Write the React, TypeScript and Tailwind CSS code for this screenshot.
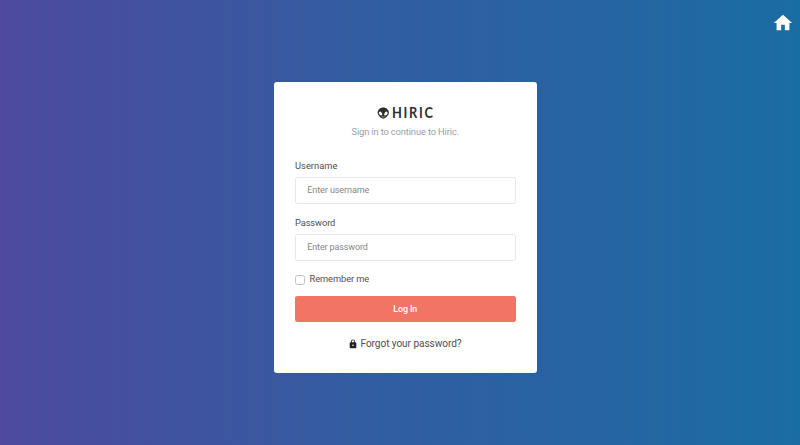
import React from "react";

type IconProps = { d: string; className: string };

function Icon({ d, className }: IconProps) {
  return (
    <svg viewBox="0 0 24 24" fill="currentColor" className={className} aria-hidden="true">
      <path d={d} />
    </svg>
  );
}

function AlienIcon({ className }: { className: string }) {
  return (
    <svg viewBox="0 0 24 24" className={className} aria-hidden="true">
      <path fill="currentColor" d="M12 2.5C17 2.5 21.3 6 21.3 10.8C21.3 15.4 15.5 21 12 21C8.5 21 2.7 15.4 2.7 10.8C2.7 6 7 2.5 12 2.5Z" />
      <ellipse cx="7.6" cy="12.6" rx="2.3" ry="3.6" transform="rotate(-38 7.6 12.6)" fill="#fff" />
      <ellipse cx="16.4" cy="12.6" rx="2.3" ry="3.6" transform="rotate(38 16.4 12.6)" fill="#fff" />
      <path d="M9.5 17.6Q12 19.2 14.5 17.6" fill="none" stroke="#fff" strokeWidth="0.9" />
    </svg>
  );
}

const HOME = "M10,20V14H14V20H19V12H22L12,3L2,12H5V20H10Z";
const LOCK =
  "M12,17A2,2 0 0,0 14,15C14,13.89 13.1,13 12,13A2,2 0 0,0 10,15A2,2 0 0,0 12,17M18,8A2,2 0 0,1 20,10V20A2,2 0 0,1 18,22H6A2,2 0 0,1 4,20V10C4,8.89 4.9,8 6,8H7V6A5,5 0 0,1 12,1A5,5 0 0,1 17,6V8H18M12,3A3,3 0 0,0 9,6V8H15V6A3,3 0 0,0 12,3Z";

export default function App() {
  return (
    <div className="relative flex h-[445px] w-[800px] items-start overflow-hidden bg-[linear-gradient(90deg,#4e4a9f_0%,#3b57a0_31%,#2f5ea1_50%,#2664a2_75%,#1a6da3_100%)] pt-[82px] pl-[273.5px] font-['Roboto',sans-serif] text-[#505050]">
      <a href="#" aria-label="Home" className="absolute top-[12px] right-[6px] text-white">
        <Icon d={HOME} className="size-[22px]" />
      </a>
      <main className="flex h-[290.5px] w-[263.5px] flex-col rounded-[3px] bg-white px-[21.5px] pt-[22px]">
        <div className="flex h-[18px] items-center justify-center text-[#2f2f2f]">
          <AlienIcon className="mr-[1px] ml-[1px] size-[14.5px]" />
          <span className="-mr-[10px] mb-[3.5px] origin-left scale-x-[0.8] font-['Lato',sans-serif] text-[16px] leading-[17px] font-bold tracking-[2.1px]">HIRIC</span>
        </div>
        <p className="mt-[2px] text-center text-[9.3px] leading-[16px] tracking-[-0.12px] text-[#98a0a8]">Sign in to continue to Hiric.</p>
        <form className="mt-[18px] flex flex-col" onSubmit={(e) => e.preventDefault()}>
          <label htmlFor="username" className="h-[19px] text-[9.3px] leading-[16px] tracking-[0.03px]">Username</label>
          <input id="username" placeholder="Enter username" className="h-[27px] w-full rounded-[2.5px] border border-[#e5e7ea] bg-white px-[11.3px] pb-[2px] text-[9px] tracking-[-0.08px] outline-none placeholder:text-[#7f878f]" />
          <label htmlFor="password" className="mt-[11px] h-[19px] text-[9.3px] leading-[16px] tracking-[-0.1px]">Password</label>
          <input id="password" type="password" placeholder="Enter password" className="h-[27px] w-full rounded-[2.5px] border border-[#e5e7ea] bg-white px-[11.3px] pb-[2px] text-[9px] tracking-[-0.13px] outline-none placeholder:text-[#7f878f]" />
          <label className="mt-[10px] flex h-[16px] items-center text-[9.3px] leading-[16px] tracking-[-0.08px]">
            <input type="checkbox" className="mt-[2px] mr-[4.5px] size-[10px] appearance-none rounded-[2.5px] border border-[#bcc3ca] bg-white" />
            Remember me
          </label>
          <button className="mt-[9px] h-[26px] rounded-[2.5px] bg-[#f17464] pt-[1px] text-[8.9px] font-medium tracking-[-0.1px] text-white">Log In</button>
        </form>
        <a href="#" className="mt-[14px] flex h-[16px] items-center justify-center text-[10.1px] leading-[16px] tracking-[-0.07px]">
          <Icon d={LOCK} className="mr-[2.5px] -ml-[1px] size-[10px] text-[#222]" />
          Forgot your password?
        </a>
      </main>
    </div>
  );
}
